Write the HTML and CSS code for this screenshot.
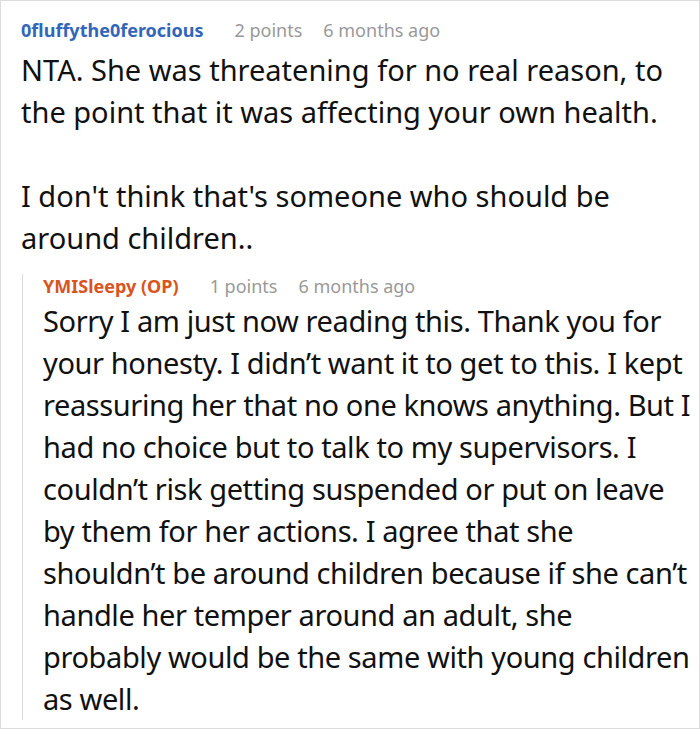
FILE: index.html
```html
<!DOCTYPE html>
<html>
<head>
<meta charset="utf-8">
<link rel="stylesheet" href="styles.css">
</head>
<body>
<div class="thread">
  <div class="comment">
    <div class="meta">
      <span class="author">0fluffythe0ferocious</span>
      <span class="points">2 points</span>
      <span class="time">6 months ago</span>
    </div>
    <div class="text">
      <p>NTA. She was threatening for no real reason, to the point that it was affecting your own health.</p>
      <p>I don't think that's someone who should be around children..</p>
    </div>
    <div class="reply">
      <div class="meta">
        <span class="author op">YMISleepy (OP)</span>
        <span class="points">1 points</span>
        <span class="time">6 months ago</span>
      </div>
      <div class="text">
        <p>Sorry I am just now reading this. Thank you for your honesty. I didn’t want it to get to this. I kept reassuring her that no one knows anything. But I had no choice but to talk to my supervisors. I couldn’t risk getting suspended or put on leave by them for her actions. I agree that she shouldn’t be around children because if she can’t handle her temper around an adult, she probably would be the same with young children as well.</p>
      </div>
    </div>
  </div>
</div>
</body>
</html>
```
FILE: styles.css
```css
html, body {
  margin: 0;
  padding: 0;
  background: #fff;
}
body {
  font-family: "Noto Sans", "Open Sans", sans-serif;
  color: #111;
}
.thread {
  width: 700px;
  height: 729px;
  box-sizing: border-box;
  border: 1px solid #dcdcdc;
  overflow: hidden;
}
.comment {
  padding: 17px 10px 0 20px;
}
.meta {
  display: flex;
  align-items: baseline;
  font-size: 18px;
  line-height: 24px;
}
.author {
  font-weight: 700;
  color: #3266b8;
  margin-right: 31px;
}
.author.op {
  color: #d9541e;
}
.points {
  color: #999;
  margin-right: 21px;
}
.time {
  color: #999;
}
.text {
  font-size: 29px;
  line-height: 42px;
  margin-top: 7px;
}
.text p {
  margin: 0 0 42px 0;
}
.text p:last-child {
  margin-bottom: 0;
}
.reply {
  margin-top: 25px;
  padding-left: 20px;
  border-left: 1px solid #dcdcdc;
  margin-left: 1px;
  margin-right: -8px;
}
.reply .meta {
  margin-top: -10px;
}
.reply .text {
  margin-top: 2px;
  margin-bottom: -9px;
  letter-spacing: -0.4px;
}
```
